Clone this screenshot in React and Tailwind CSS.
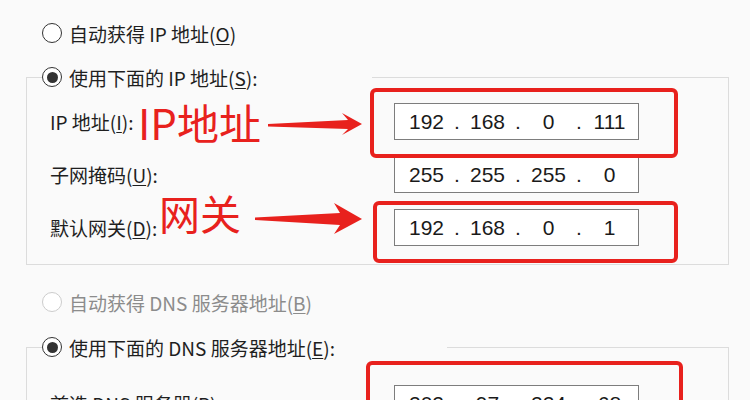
import React from 'react';

const cjk = { fontFamily: '"Noto Sans CJK SC", "Noto Sans", sans-serif' };

function Radio({ checked, disabled }) {
  return (
    <span
      className={`flex h-[20px] w-[20px] shrink-0 items-center justify-center rounded-full border-[1.5px] bg-white ${
        disabled ? 'border-[#cccccc]' : 'border-[#333333]'
      }`}
    >
      {checked && <span className="h-[11px] w-[11px] rounded-full bg-[#333333]" />}
    </span>
  );
}

function RadioLabel({ checked, disabled, children }) {
  return (
    <div className="flex h-[22px] items-center gap-[7px]">
      <Radio checked={checked} disabled={disabled} />
      <span
        className={`whitespace-nowrap text-[19px] leading-none ${disabled ? 'text-[#8c8c8c]' : 'text-[#1f1f1f]'}`}
        style={cjk}
      >
        {children}
      </span>
    </div>
  );
}

function IpBox({ parts }) {
  return (
    <div
      className="flex h-[37px] w-[245px] items-center border border-[#7d7d7d] bg-white pl-[5px] text-[21px] leading-none text-[#1a1a1a]"
      style={{ fontFamily: '"Liberation Sans", Arial, sans-serif' }}
    >
      {parts.map((p, i) => (
        <React.Fragment key={i}>
          {i > 0 && <span className="w-[8px] text-center">.</span>}
          <span className="w-[53px] text-center">{p}</span>
        </React.Fragment>
      ))}
    </div>
  );
}

function Row({ label, parts }) {
  return (
    <div className="flex items-center">
      <span className="w-[344px] whitespace-nowrap text-[19px] leading-none text-[#1f1f1f]" style={cjk}>
        {label}
      </span>
      <IpBox parts={parts} />
    </div>
  );
}

function GroupBox({ legend, lineOffset, className, children }) {
  return (
    <div className={`ml-[26px] w-[703px] ${className || ''}`}>
      <div className="flex h-[22px] items-center">
        <div className="h-[11px] w-[16px] self-end border-l border-t border-[#dcdcdc]" />
        {legend}
        <div className="h-[11px] flex-1 self-end border-r border-[#dcdcdc]">
          <div className="h-px bg-[#dcdcdc]" style={{ marginLeft: lineOffset }} />
        </div>
      </div>
      {children}
    </div>
  );
}

export default function App() {
  return (
    <div className="relative h-[400px] w-[750px] overflow-hidden bg-[#fafafa]">
      <div className="flex flex-col pt-[22px]">
        <div className="pl-[42px]">
          <RadioLabel>
            自动获得 IP 地址(<u className="underline-offset-2">O</u>)
          </RadioLabel>
        </div>

        <GroupBox
          className="mt-[22px]"
          lineOffset="114px"
          legend={
            <RadioLabel checked>
              使用下面的 IP 地址(<u className="underline-offset-2">S</u>):
            </RadioLabel>
          }
        >
          <div className="flex flex-col gap-[16px] border-x border-b border-[#dcdcdc] pb-[18px] pl-[23px] pt-[15px]">
            <Row
              label={<>IP 地址(<u className="underline-offset-2">I</u>):</>}
              parts={['192', '168', '0', '111']}
            />
            <Row
              label={<>子网掩码(<u className="underline-offset-2">U</u>):</>}
              parts={['255', '255', '255', '0']}
            />
            <Row
              label={<>默认网关(<u className="underline-offset-2">D</u>):</>}
              parts={['192', '168', '0', '1']}
            />
          </div>
        </GroupBox>

        <div className="mt-[26px] pl-[42px]">
          <RadioLabel disabled>
            自动获得 DNS 服务器地址(<u className="underline-offset-2">B</u>)
          </RadioLabel>
        </div>

        <GroupBox
          className="mt-[23px]"
          lineOffset="112px"
          legend={
            <RadioLabel checked>
              使用下面的 DNS 服务器地址(<u className="underline-offset-2">E</u>):
            </RadioLabel>
          }
        >
          <div className="flex flex-col border-x border-b border-[#dcdcdc] pb-[18px] pl-[23px] pt-[27px]">
            <Row
              label={<>首选 DNS 服务器(<u className="underline-offset-2">P</u>):</>}
              parts={['202', '97', '224', '68']}
            />
          </div>
        </GroupBox>
      </div>

      {/* red annotations */}
      <div className="absolute left-[370px] top-[88px] h-[70px] w-[308px] rounded-[6px] border-4 border-[#e8211d]" />
      <div className="absolute left-[373px] top-[201px] h-[62px] w-[305px] rounded-[6px] border-4 border-[#e8211d]" />
      <div className="absolute left-[366px] top-[361px] h-[60px] w-[317px] rounded-[6px] border-4 border-[#e8211d]" />

      <div className="absolute left-[138px] top-[101px] text-[42px] leading-none text-[#e8211d]" style={cjk}>
        IP地址
      </div>
      <div className="absolute left-[159px] top-[192px] text-[41px] leading-none text-[#e8211d]" style={cjk}>
        网关
      </div>

      <svg className="pointer-events-none absolute inset-0" width="750" height="400" viewBox="0 0 750 400">
        <polygon fill="#e8211d" points="268,124 348,120 342,113 362,124 342,135 348,129 268,126.5" />
        <polygon fill="#e8211d" points="255,217.5 340,213 334,203 362,219 334,234 340,225 255,220" />
      </svg>
    </div>
  );
}
